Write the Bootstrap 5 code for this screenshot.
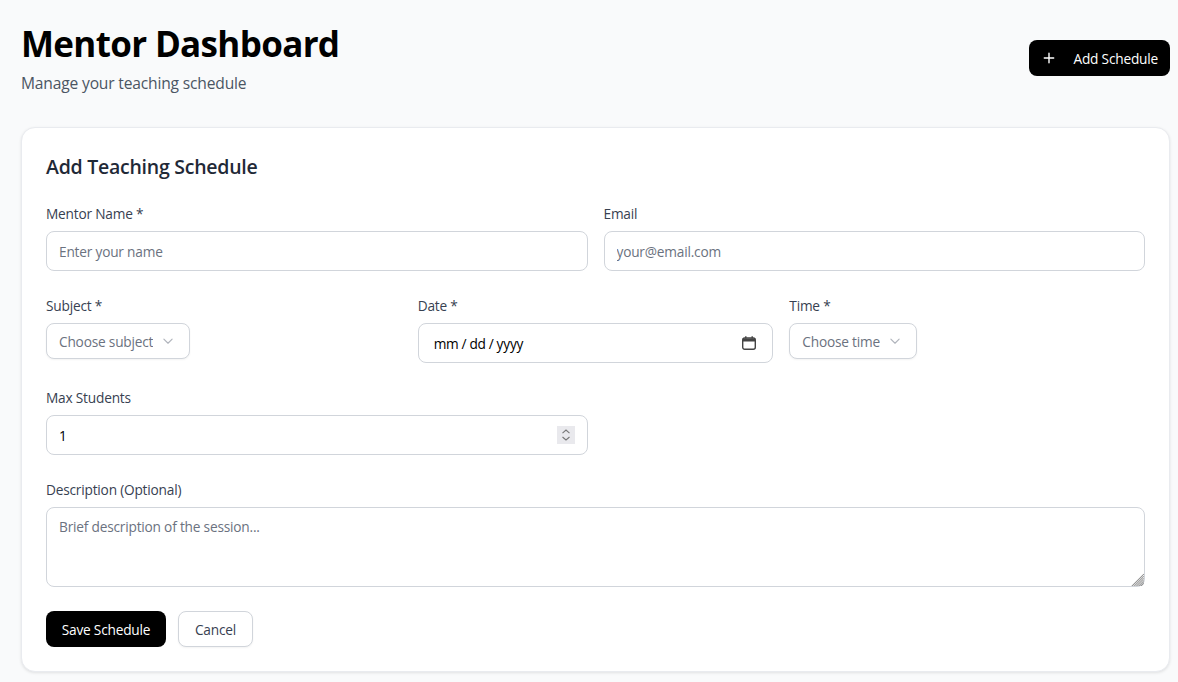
<!DOCTYPE html>
<html lang="en">
<head>
<meta charset="utf-8">
<title>Mentor Dashboard</title>
<link href="https://cdn.jsdelivr.net/npm/bootstrap@5.3.0/dist/css/bootstrap.min.css" rel="stylesheet">
<style>
html,body{height:682px;overflow:hidden}
body{background:#f9fafb;font-family:"Open Sans","Noto Sans",sans-serif;font-size:13.7px;color:#374151;letter-spacing:-.015em}
.page-wrap{padding:24px 8px 0 21px}
.page-title{font-size:35px;line-height:40px;font-weight:700;color:#000;margin:0 0 7px;letter-spacing:-.019em}
.page-sub{font-size:15.6px;line-height:24px;color:#4b5563;margin:0;letter-spacing:-.011em}
.add-btn{background:#000;color:#fff;border:0;border-radius:8px;height:36px;padding:2px 12px 0;font-size:13.7px;gap:16px;margin-top:16px;letter-spacing:inherit}
.add-btn svg{margin-top:-2px}
.add-btn:hover{background:#000;color:#fff}
.panel{margin-top:32px;background:#fff;border:1px solid #e9ebef;border-radius:14px;padding:25px 24px 24px;height:545px;box-shadow:0 1px 3px rgba(0,0,0,.1)}
.panel-title{font-size:19.5px;line-height:28px;font-weight:600;color:#1f2937;margin:0 0 23px;letter-spacing:-.013em}
.fld-label{display:block;font-size:13.7px;line-height:20px;color:#374151;margin:0 0 7px}
.fld-row{--bs-gutter-x:16px;margin-bottom:25px}
.fld-row-last{margin-bottom:24px}
.fld-input{height:40px;border:1px solid #d1d5db;border-radius:8px;padding:0 12px;font-size:13.7px;color:#000;box-shadow:none;letter-spacing:inherit}
.fld-input::placeholder{color:#6b7280;opacity:1}
.fld-input[type=number]::-webkit-inner-spin-button{-webkit-appearance:none;appearance:none;opacity:1;width:18px;height:18px;background:#e9e9ed url("data:image/svg+xml,%3csvg xmlns='http://www.w3.org/2000/svg' viewBox='0 0 18 18'%3e%3cpath fill='none' stroke='%23777' stroke-width='1.1' d='M5.5 7.2 9 4l3.5 3.2M5.5 11 9 14l3.5-3'/%3e%3c/svg%3e") center no-repeat}
.fld-date{padding:2px 12px 0 15px}
.fld-date::-webkit-datetime-edit-text{padding:0 3px}
.fld-date::-webkit-calendar-picker-indicator{width:16px;height:16px;padding:0;margin:-2px 3px 0 0;opacity:1;background:url("data:image/svg+xml,%3csvg xmlns='http://www.w3.org/2000/svg' viewBox='0 0 16 16'%3e%3crect x='1.7' y='3' width='12.6' height='11.3' rx='2' fill='none' stroke='%23444' stroke-width='1.4'/%3e%3cpath d='M2 3.5h12V6.6H2z' fill='%23444'/%3e%3cpath d='M4.8 1.2v2.4M11.2 1.2v2.4' stroke='%23444' stroke-width='1.4'/%3e%3c/svg%3e") center no-repeat}
.fld-area{height:80px;padding:9px 12px;resize:vertical}
.fld-area::-webkit-resizer{background:url("data:image/svg+xml,%3csvg xmlns='http://www.w3.org/2000/svg' viewBox='0 0 16 16'%3e%3cpath stroke='%23777' stroke-width='1' d='M16 3 3 16M16 5 5 16M16 7 7 16M16 9 9 16M16 11 11 16M16 13 13 16'/%3e%3c/svg%3e") center no-repeat}
.fld-select{height:36px;width:auto;border:1px solid #d1d5db;border-radius:8px;padding:2px 36px 0 12px;font-size:13.7px;color:#6b7280;letter-spacing:inherit;box-shadow:0 1px 2px rgba(0,0,0,.05);background-position:right 15px center;background-size:12px 12px;background-image:url("data:image/svg+xml,%3csvg xmlns='http://www.w3.org/2000/svg' viewBox='0 0 16 16'%3e%3cpath fill='none' stroke='%23b0b4bc' stroke-width='1.5' stroke-linecap='round' stroke-linejoin='round' d='M2.5 5.5 8 11l5.5-5.5'/%3e%3c/svg%3e")}
.fld-select-subject{width:144px}
.btn-save{background:#000;color:#fff;border:0;border-radius:8px;height:36px;width:120px;font-size:13.7px;padding:2px 0 0;letter-spacing:inherit}
.btn-save:hover{background:#000;color:#fff}
.btn-cancel{background:#fff;color:#374151;border:1px solid #d1d5db;border-radius:8px;height:36px;width:75px;font-size:13.7px;padding:2px 0 0;letter-spacing:inherit;box-shadow:0 1px 2px rgba(0,0,0,.05)}
</style>
</head>
<body>
<div class="page-wrap">
  <header class="d-flex justify-content-between align-items-start">
    <div>
      <h1 class="page-title">Mentor Dashboard</h1>
      <p class="page-sub">Manage your teaching schedule</p>
    </div>
    <button type="button" class="btn add-btn d-flex align-items-center">
      <svg width="16" height="16" viewBox="0 0 16 16" fill="none" stroke="#fff" stroke-width="1.4" stroke-linecap="round"><path d="M8 3.3v9.4M3.3 8h9.4"/></svg>
      <span>Add Schedule</span>
    </button>
  </header>
  <section class="panel">
    <h2 class="panel-title">Add Teaching Schedule</h2>
    <form>
      <div class="row fld-row">
        <div class="col-6"><label class="fld-label" for="a">Mentor Name *</label><input id="a" class="form-control fld-input" placeholder="Enter your name"></div>
        <div class="col-6"><label class="fld-label" for="b">Email</label><input id="b" type="email" class="form-control fld-input" placeholder="your@email.com"></div>
      </div>
      <div class="row fld-row">
        <div class="col-4"><label class="fld-label" for="c">Subject *</label><select id="c" class="form-select fld-select fld-select-subject"><option>Choose subject</option></select></div>
        <div class="col-4"><label class="fld-label" for="d">Date *</label><input id="d" type="date" class="form-control fld-input fld-date"></div>
        <div class="col-4"><label class="fld-label" for="e">Time *</label><select id="e" class="form-select fld-select"><option>Choose time</option></select></div>
      </div>
      <div class="row fld-row">
        <div class="col-6"><label class="fld-label" for="f">Max Students</label><input id="f" type="number" value="1" min="1" class="form-control fld-input"></div>
      </div>
      <div class="fld-row fld-row-last">
        <label class="fld-label" for="g">Description (Optional)</label>
        <textarea id="g" class="form-control fld-input fld-area" placeholder="Brief description of the session..."></textarea>
      </div>
      <div class="d-flex gap-2">
        <button type="button" class="btn btn-save">Save Schedule</button>
        <button type="button" class="btn btn-cancel ms-1">Cancel</button>
      </div>
    </form>
  </section>
</div>
</body>
</html>
